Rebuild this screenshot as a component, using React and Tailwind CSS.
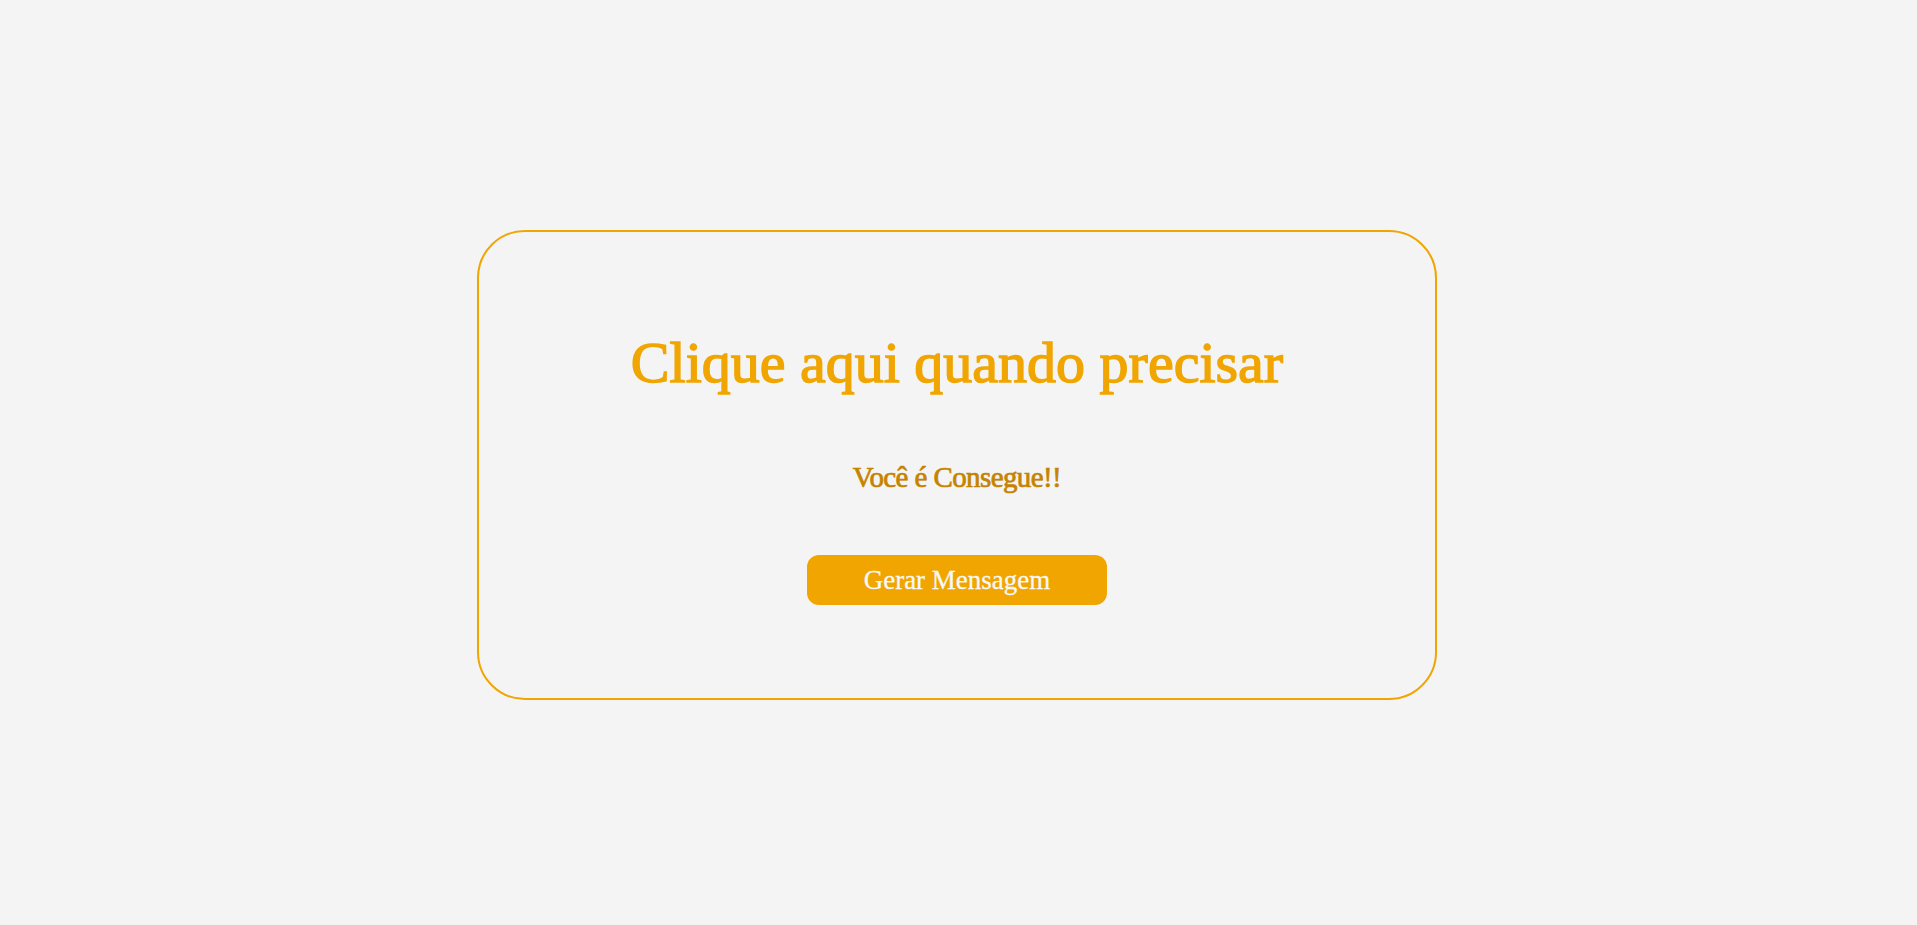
export default function App() {
  return (
    <div className="h-screen w-full bg-[#f4f4f4] flex items-center justify-center pt-[5px] pr-[3px] font-['Liberation_Serif',serif]">
      <div className="w-[960px] h-[470px] border-2 border-[#f0a500] rounded-[48px] flex flex-col items-center pt-[102px]">
        <h1 className="text-[58px] leading-none text-[#f0a500] whitespace-nowrap [-webkit-text-stroke:1.4px_#f0a500]">
          Clique aqui quando precisar
        </h1>
        <p className="mt-[70px] text-[29px] leading-[30px] tracking-[-0.6px] text-[#c58300] [-webkit-text-stroke:0.7px_#c58300]">
          Você é Consegue!!
        </p>
        <button className="mt-[63px] w-[300px] h-[50px] rounded-xl bg-[#f0a500] text-[#f7f7f7] text-[27px] leading-none flex items-center justify-center [-webkit-text-stroke:0.3px_#f7f7f7]">
          Gerar Mensagem
        </button>
      </div>
    </div>
  );
}
